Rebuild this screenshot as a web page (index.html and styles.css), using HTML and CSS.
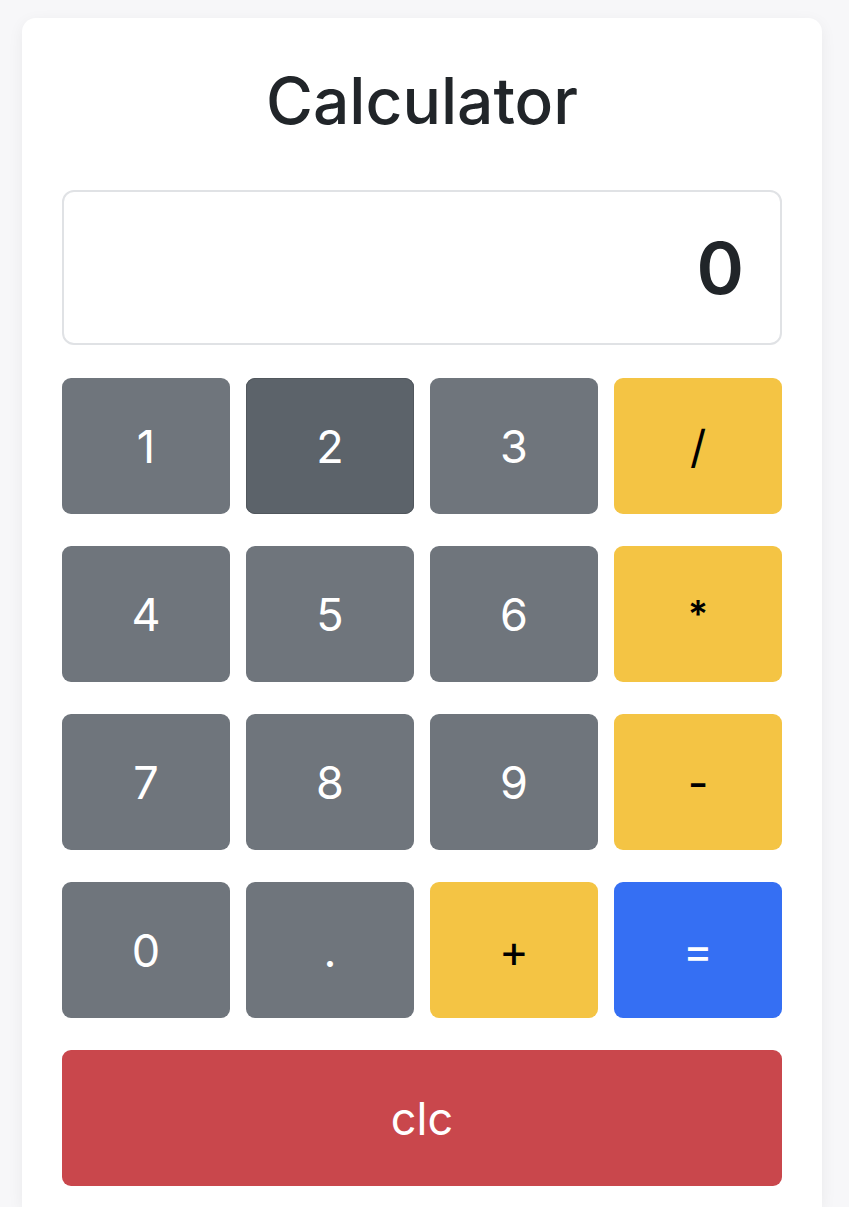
FILE: index.html
```html
<!DOCTYPE html>
<html lang="en">
<head>
    <meta charset="UTF-8">
    <meta name="viewport" content="width=device-width, initial-scale=1.0">
    <title>Calculator</title>
    <link rel="stylesheet" href="styles.css">
</head>
<body>
    <div class="calculator">
        <h1>Calculator</h1>
        <div class="display" id="display">0</div>
        <div class="keys">
            <button class="key">1</button>
            <button class="key active">2</button>
            <button class="key">3</button>
            <button class="key op">/</button>
            <button class="key">4</button>
            <button class="key">5</button>
            <button class="key">6</button>
            <button class="key op star">*</button>
            <button class="key">7</button>
            <button class="key">8</button>
            <button class="key">9</button>
            <button class="key op">-</button>
            <button class="key">0</button>
            <button class="key">.</button>
            <button class="key op">+</button>
            <button class="key equals">=</button>
        </div>
        <button class="key clear">clc</button>
    </div>
</body>
</html>
```

FILE: styles.css
```css
body {
    font-family: 'Inter', 'Liberation Sans', sans-serif;
    margin: 0;
    padding: 18px 0 0 22px;
    background-color: #f7f7f9;
    color: #212529;
    height: 1207px;
    box-sizing: border-box;
    overflow: hidden;
}
.calculator {
    width: 800px;
    height: 1189px;
    box-sizing: border-box;
    padding: 40px;
    background-color: #ffffff;
    border-radius: 14px 14px 0 0;
    box-shadow: 0 4px 16px rgba(0, 0, 0, 0.06);
}
h1 {
    margin: 0 0 46px;
    font-size: 64px;
    line-height: 86px;
    font-weight: 500;
    text-align: center;
}
.display {
    height: 155px;
    box-sizing: border-box;
    border: 2px solid #e0e2e5;
    border-radius: 12px;
    padding: 0 36px;
    display: flex;
    align-items: center;
    justify-content: flex-end;
    font-size: 72px;
    font-weight: 600;
    margin-bottom: 33px;
}
.keys {
    display: grid;
    grid-template-columns: repeat(4, 168px);
    column-gap: 16px;
    row-gap: 32px;
}
.key {
    height: 136px;
    border: none;
    border-radius: 9px;
    background-color: #6f757c;
    color: #ffffff;
    font-family: inherit;
    font-size: 45px;
    padding: 0;
    cursor: pointer;
}
.key.active {
    background-color: #5c636a;
    box-shadow: inset 0 0 0 1px #51575d;
}
.key.op {
    background-color: #f4c444;
    color: #000000;
}
.key.star {
    font-size: 38px;
    font-weight: 600;
}
.key.equals {
    background-color: #356ff3;
}
.key.clear {
    display: block;
    width: 100%;
    margin-top: 32px;
    background-color: #c9474c;
}
```
